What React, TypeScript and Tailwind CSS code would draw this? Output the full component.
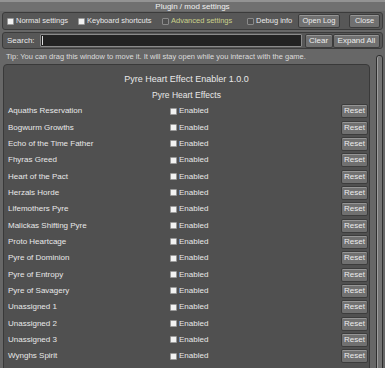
import React from 'react';

const effects = [
  'Aquaths Reservation',
  'Bogwurm Growths',
  'Echo of the Time Father',
  'Fhyras Greed',
  'Heart of the Pact',
  'Herzals Horde',
  'Lifemothers Pyre',
  'Malickas Shifting Pyre',
  'Proto Heartcage',
  'Pyre of Dominion',
  'Pyre of Entropy',
  'Pyre of Savagery',
  'Unassigned 1',
  'Unassigned 2',
  'Unassigned 3',
  'Wynghs Spirit',
];

function Check({ checked }: { checked: boolean }) {
  return (
    <span
      className={
        checked
          ? 'inline-block shrink-0 w-[7px] h-[7px] mr-[2px] bg-[#f2f2f2] border border-[#9a9a9a] rounded-[1px]'
          : 'inline-block shrink-0 w-[7px] h-[7px] mr-[2px] bg-[#505050] border border-[#8a8a8a] rounded-[1px]'
      }
    />
  );
}

function Btn({ label, className = '' }: { label: string; className?: string }) {
  return (
    <span
      className={
        'flex shrink-0 items-center justify-center whitespace-nowrap h-[14px] rounded-[2px] border border-[#3c3c3c] bg-[#707070] shadow-[inset_0_1px_0_#959595] text-[#ececec] ' +
        className
      }
    >
      {label}
    </span>
  );
}

export default function App() {
  return (
    <div
      className="w-[385px] h-[368px] overflow-hidden bg-[#676767] text-[#e8e8e8] text-[8px] leading-none whitespace-nowrap"
      style={{ fontFamily: '"Liberation Sans", Arial, sans-serif' }}
    >
      <div className="h-[11px] border-t-[2px] border-[#939393] bg-[#707070] flex items-center justify-center text-[8px] text-[#f0f0f0]">
        Plugin / mod settings
      </div>
      <div className="mx-[2px] mt-[1px] h-[18px] rounded-[3px] border border-[#3b3b3b] bg-[#575757] flex items-center pl-[4px] pr-[2px] text-[7.5px]">
        <span className="flex items-center w-[71px]">
          <Check checked />
          Normal settings
        </span>
        <span className="flex items-center w-[84px]">
          <Check checked />
          Keyboard shortcuts
        </span>
        <span className="flex items-center w-[85px] text-[#c9d08a]">
          <Check checked={false} />
          Advanced settings
        </span>
        <span className="flex items-center w-[51px]">
          <Check checked={false} />
          Debug info
        </span>
        <Btn label="Open Log" className="w-[42px]" />
        <Btn label="Close" className="ml-auto w-[31px]" />
      </div>
      <div className="mx-[2px] mt-[2px] h-[17px] rounded-[3px] border border-[#3b3b3b] bg-[#575757] flex items-center pl-[4px] pr-[2px]">
        <span className="mr-[5px]">Search:</span>
        <span className="h-[13px] w-[262px] bg-[#222222] border border-[#8a8a8a] rounded-[1px] flex items-center pl-[1px]">
          <span className="w-px h-[9px] bg-[#dddddd]" />
        </span>
        <Btn label="Clear" className="ml-[3px] w-[28px]" />
        <Btn label="Expand All" className="ml-auto w-[47px]" />
      </div>
      <div className="flex">
        <div className="flex-1 min-w-0">
          <div className="h-[15px] flex items-center pl-[6px] text-[7.5px] text-[#dcdcdc]">
            Tip: You can drag this window to move it. It will stay open while you interact with the game.
          </div>
          <div className="ml-[3px] mr-[4px] rounded-[4px] border border-[#393939] bg-[#505050] h-[320px] pt-[6px]">
            <div className="text-center text-[9px] h-[16px] flex items-center justify-center">
              Pyre Heart Effect Enabler 1.0.0
            </div>
            <div className="text-center text-[8.5px] h-[16px] flex items-center justify-center">
              Pyre Heart Effects
            </div>
            <div className="flex flex-col">
              {effects.map((name) => (
                <div key={name} className="h-[16.35px] flex items-center pl-[4px] pr-[1px]">
                  <span className="w-[162px]">{name}</span>
                  <span className="flex items-center">
                    <Check checked />
                    Enabled
                  </span>
                  <Btn label="Reset" className="ml-auto w-[27px]" />
                </div>
              ))}
            </div>
          </div>
        </div>
        <div className="w-[11px] pt-[6px] pr-[2px] flex justify-end">
          <div className="w-[7px] h-[330px] rounded-[3px] border border-[#2e2e2e] bg-[#747474] shadow-[inset_1px_0_0_#9e9e9e]" />
        </div>
      </div>
    </div>
  );
}
